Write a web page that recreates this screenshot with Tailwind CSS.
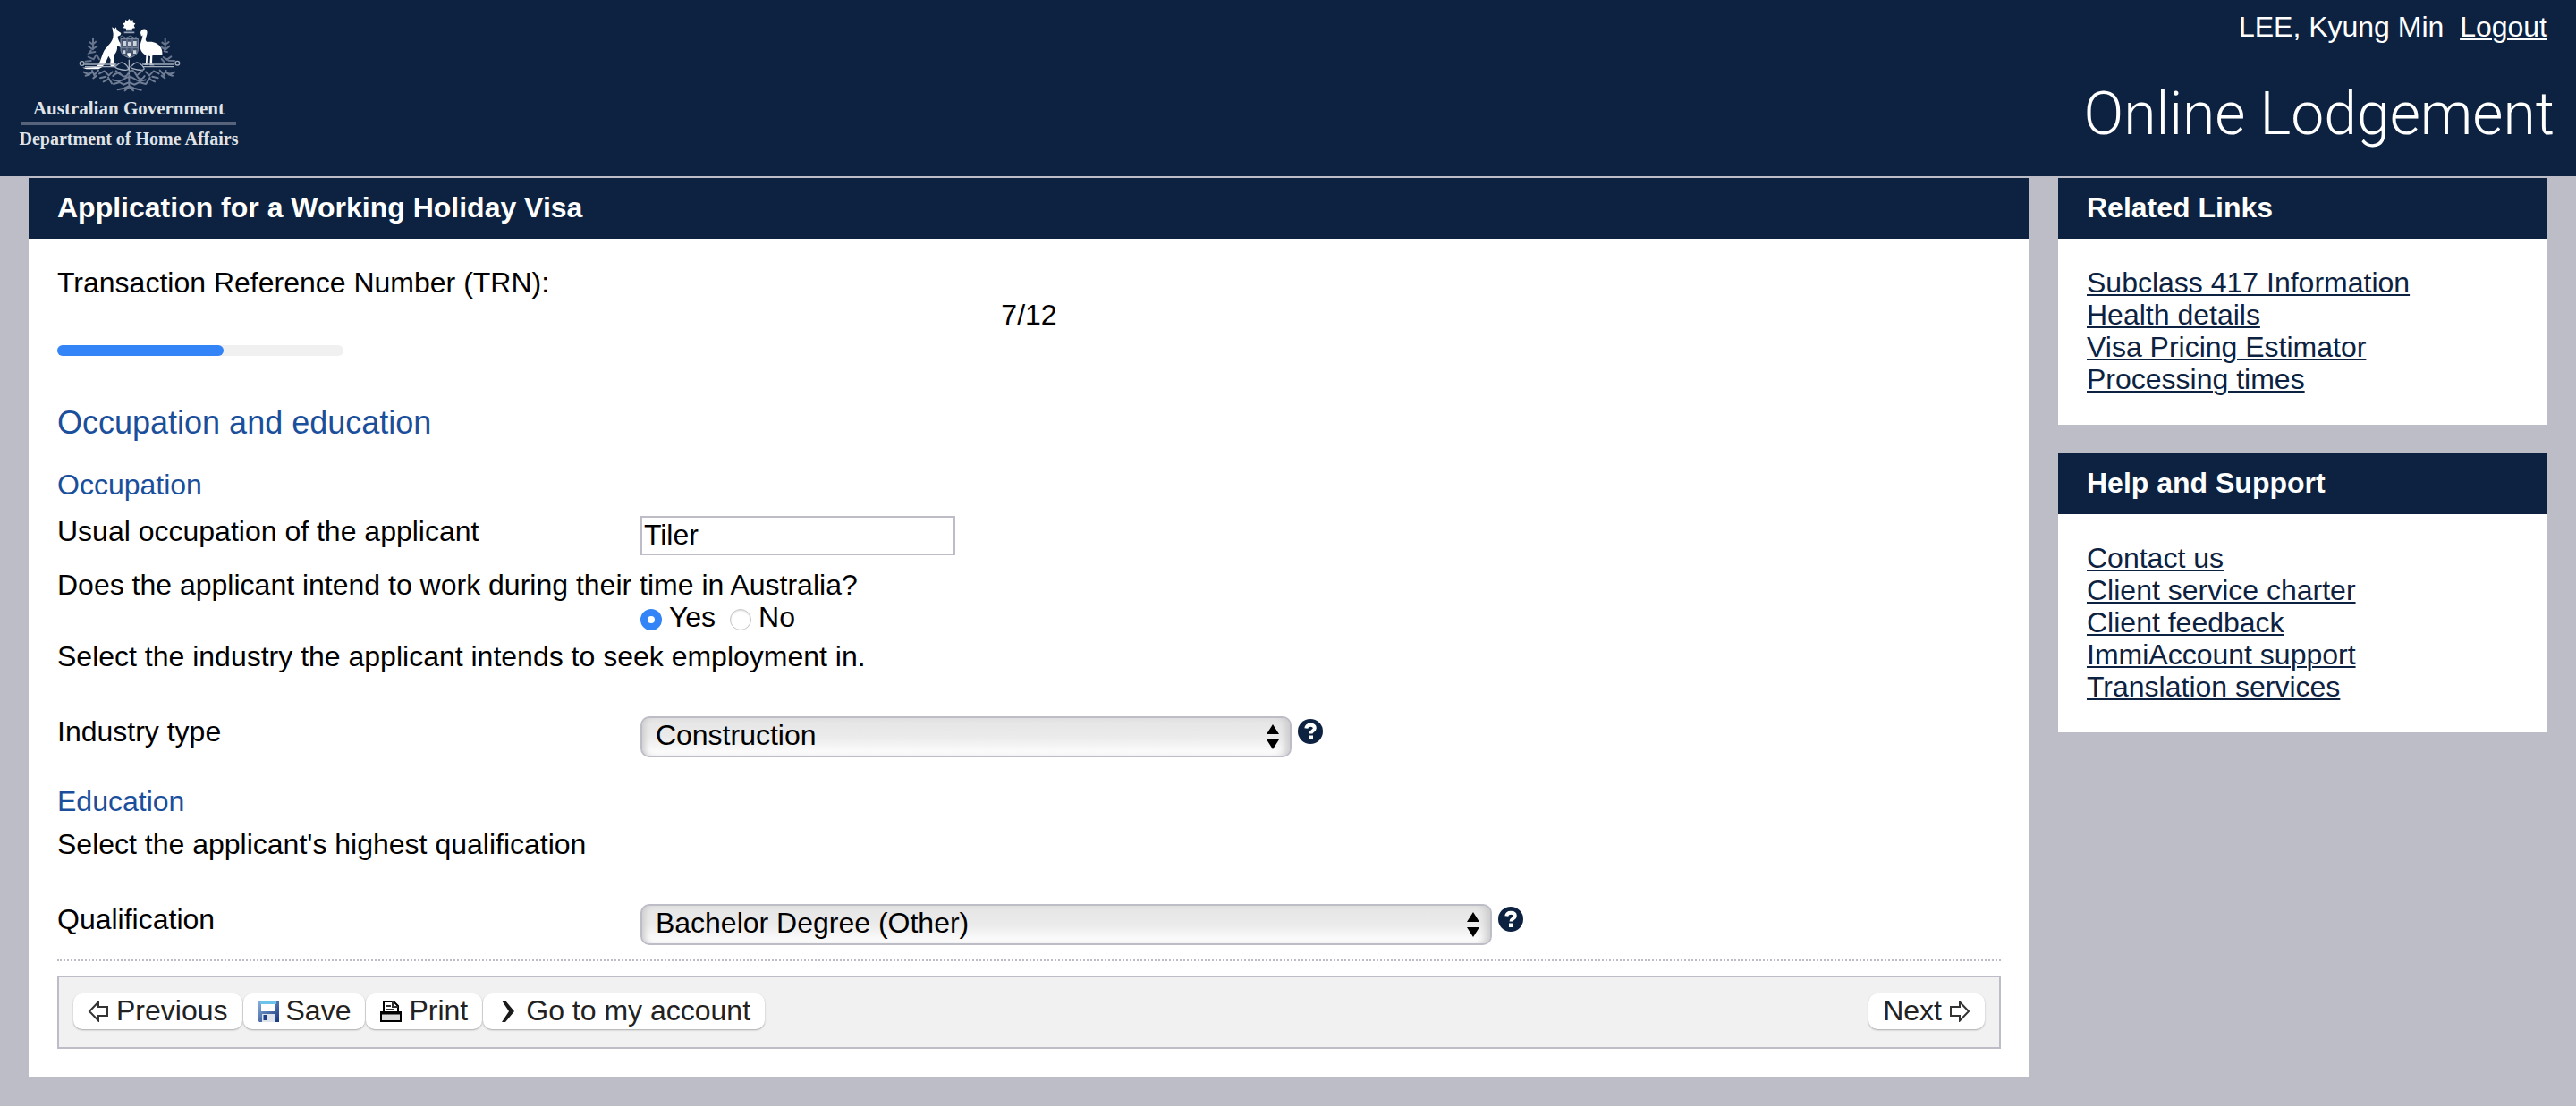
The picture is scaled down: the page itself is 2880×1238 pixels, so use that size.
<!DOCTYPE html>
<html lang="en">
<head>
	<meta charset="UTF-8">
	<meta name="viewport" content="width=device-width, initial-scale=1.0">
	<script src="https://cdn.jsdelivr.net/npm/@tailwindcss/browser@4"></script>
	<title>Application for a Working Holiday Visa</title>
</head>
<body class="bg-white font-['Liberation_Sans',sans-serif] text-[32px] leading-9 text-black">

	<header class="flex justify-between bg-[#0d2240] h-[197px] text-white">
		<div class="ml-6 w-60 pt-4 flex flex-col items-center font-['Liberation_Serif',serif] font-bold text-[20px] leading-[22px] text-[#dfe2e8] whitespace-nowrap">
			<svg class="w-[126px] h-[94px]" viewBox="0 0 378 282" fill="none" aria-label="Commonwealth Coat of Arms" role="img">
				<!-- star and wreath -->
				<path fill="#fff" d="M190 15l5 7 8-3 0 9 8 3-5 7 4 8-9 1-3 8-8-4-8 4-3-8-9-1 4-8-5-7 8-3 0-9 8 3z"/>
				<path stroke="#9aa5b8" stroke-width="5" d="M173 61h35M180 53h20"/>
				<!-- kangaroo -->
				<path fill="#fff" d="M133 43l9 6 4-6 4 11 13 9-2 7-9 4c0 10 5 16 8 23l7 8-5 7-11-7-1 3c1 10-2 20-9 27l-3 19 6 18-12 6-6-8 2-18-7-12-10 22-11 15-12 7H47l-14-5 45-2c14-7 18-32 26-50 7-17 26-26 32-48l1-13z"/>
				<!-- emu -->
				<path fill="#fff" d="M228 62c1-9 9-15 18-11 8 5 4 17 1 26-3 8-2 13 5 16 17-4 37 5 44 18 5 8 6 18 5 27l-15-3-18 4-1 27 8 6h-16l2-31-8-2-2 22 4 9h-15l6-8 1-25c-13-6-21-18-20-33 2-12 9-24 8-34l-4 4z"/>
				<!-- shield -->
				<path fill="#44546f" stroke="#8490a6" stroke-width="3" d="M162 82h58v36c0 15-13 24-29 28-16-4-29-13-29-28z"/>
				<path fill="#cdd3dd" d="M168 90h12v17h-12zM204 90h11v17h-11zM186 92h11v13h-11zM168 121h10v11h-10zM204 121h10v11h-10z"/>
				<path fill="#fff" d="M184 130h14v8l-7 7-7-7z"/>
				<path stroke="#77849b" stroke-width="3" d="M160 76q7-7 13 0t14 0 14 0 14 0M162 112h58M183 84v40M201 84v40"/>
				<!-- branches beside the supporters -->
				<g stroke="#66748d" stroke-width="6" stroke-linecap="round">
					<path d="M69 80v38M57 93l11 8 10-9M54 108l13 9 16-10M62 122l-6 8 20-4M53 143l18 8 8-14M44 158l18-2M82 137l8 14"/>
					<path d="M311 80v38M301 95l10 7 12-9M299 110l12 9 14-12M318 126l-10-2M305 144l12 8 14-10M322 155l20 1M299 150l8 9"/>
				</g>
				<!-- scroll supports -->
				<g stroke="#a2adbd" stroke-width="4">
					<path d="M40 168h108M42 176h102M234 168h108M236 176h104"/>
					<circle cx="32" cy="165" r="7"/>
					<circle cx="352" cy="164" r="7"/>
					<path d="M148 172q18-20 34 0t-16 14-18-14M200 172q16-20 34 0t-16 14-18-14M190 152v50"/>
				</g>
				<!-- wattle -->
				<g stroke="#6f7d95" stroke-width="6" stroke-linecap="round">
					<path d="M38 194q14 10 26 2M44 206l14-4M66 189l7 15 14-16M70 214l11-8M90 199l16-8M93 214l19-5M108 191l14 14 12-12M104 226l16-8M120 212l12 20"/>
					<path d="M342 194q-14 10-26 2M336 206l-14-4M314 189l-7 15-14-16M310 214l-11-8M290 199l-16-8M287 214l-19-5M272 191l-14 14-12-12M276 226l-16-8M260 212l-12 20"/>
					<path d="M136 207q16-18 28-4t24-6 26 6 28 4M135 220q24 8 40-4t32 0 38 4M138 234l20-6 14 8 18-8 18 8 16-8 22 6M190 205v40M152 253l22-5 16-8 16 8 24 6M176 256l14-12 14 12M146 190l14 12M234 190l-14 12"/>
				</g>
			</svg>
			<span class="text-[21px]">Australian Government</span>
			<div class="mt-1 mb-1 w-full h-1 bg-[#56637b]"></div>
			<span>Department of Home Affairs</span>
		</div>
		<div class="flex flex-col items-end">
			<p class="mt-3 mr-8">LEE, Kyung Min&nbsp; <a class="underline decoration-2 underline-offset-2" href="#">Logout</a></p>
			<h1 class="mt-10 mr-6 font-['Roboto',sans-serif] font-light text-[66px] leading-[80px]">Online Lodgement</h1>
		</div>
	</header>

	<div class="flex items-start gap-8 bg-[#bdbdc7] px-8 pt-0.5 pb-8">

		<main class="flex-1 bg-white">
			<h2 class="bg-[#0d2240] text-white font-bold px-8 pt-[15px] pb-[17px]">Application for a Working Holiday Visa</h2>

			<form class="p-8 leading-[34px]">
				<p>Transaction Reference Number (TRN):</p>
				<p class="mt-0.5 text-center">7/12</p>
				<div class="mt-[17px] w-80 h-3 rounded-full bg-[#f0f0f0]" role="progressbar" aria-label="Application progress" aria-valuenow="7" aria-valuemax="12">
					<div class="h-3 rounded-full bg-[#3385f7]" style="width: 58%"></div>
				</div>

				<h3 class="mt-[55px] text-[36px] leading-10 text-[#1a4f9c]">Occupation and education</h3>

				<h4 class="mt-8 text-[#1a4f9c]">Occupation</h4>
				<div class="mt-[18px] flex items-start">
					<label class="w-[30%]" for="occupation">Usual occupation of the applicant</label>
					<input class="w-[352px] h-11 border-2 border-[#bdbdc7] bg-white pl-0.5 pb-0.5" type="text" id="occupation" value="Tiler">
				</div>

				<fieldset class="mt-4">
					<legend>Does the applicant intend to work during their time in Australia?</legend>
					<div class="mt-0.5 ml-[30%] flex gap-4">
						<label class="flex gap-2">
							<input class="mt-2 appearance-none size-6 rounded-full border border-[#c4c4c4] bg-white shadow-[inset_0_1px_2px_#ddd] checked:border-[8px] checked:border-[#3385f7] checked:shadow-none" type="radio" name="work" checked>
							Yes
						</label>
						<label class="flex gap-2">
							<input class="mt-2 appearance-none size-6 rounded-full border border-[#c4c4c4] bg-white shadow-[inset_0_1px_2px_#ddd] checked:border-[8px] checked:border-[#3385f7] checked:shadow-none" type="radio" name="work">
							No
						</label>
					</div>
				</fieldset>

				<p class="mt-[10px]">Select the industry the applicant intends to seek employment in.</p>
				<div class="mt-[50px] flex items-start">
					<label class="w-[30%]" for="industry">Industry type</label>
					<div class="relative">
						<select class="block appearance-none w-[728px] h-[46px] pl-[15px] pb-1 leading-9 rounded-[10px] border-2 border-[#bdbdc7] bg-linear-to-b from-[#e5e5e5] via-[#ebebeb] to-white shadow-[inset_7px_0_6px_-4px_#ccc,inset_-9px_0_8px_-4px_#ccc]" id="industry">
							<option>Construction</option>
						</select>
						<svg class="absolute right-[14px] top-[9px] w-[14px] h-[28px] pointer-events-none" viewBox="0 0 14 28"><path d="M7 0l7 11H0zM7 28l7-11H0z"/></svg>
					</div>
					<button class="ml-[7px] mt-[3px]" type="button" aria-label="Help">
						<svg class="size-7" viewBox="0 0 28 28">
							<circle cx="14" cy="14" r="14" fill="#0d2240"/>
							<path d="M9.300 10.500C9.600 7.800 11.500 6.700 14.200 6.700c3 0 4.600 1.400 4.600 3.500 0 3.300-4.300 3.200-4.300 6.300" fill="none" stroke="#fff" stroke-width="4"/>
							<path d="M12 18.500h5v4.500h-5z" fill="#fff"/>
						</svg>
					</button>
				</div>

				<h4 class="mt-8 text-[#1a4f9c]">Education</h4>
				<p class="mt-[14px]">Select the applicant's highest qualification</p>
				<div class="mt-[50px] flex items-start">
					<label class="w-[30%]" for="qualification">Qualification</label>
					<div class="relative">
						<select class="block appearance-none w-[952px] h-[46px] pl-[15px] pb-1 leading-9 rounded-[10px] border-2 border-[#bdbdc7] bg-linear-to-b from-[#e5e5e5] via-[#ebebeb] to-white shadow-[inset_7px_0_6px_-4px_#ccc,inset_-9px_0_8px_-4px_#ccc]" id="qualification">
							<option>Bachelor Degree (Other)</option>
						</select>
						<svg class="absolute right-[14px] top-[9px] w-[14px] h-[28px] pointer-events-none" viewBox="0 0 14 28"><path d="M7 0l7 11H0zM7 28l7-11H0z"/></svg>
					</div>
					<button class="ml-[7px] mt-[3px]" type="button" aria-label="Help">
						<svg class="size-7" viewBox="0 0 28 28">
							<circle cx="14" cy="14" r="14" fill="#0d2240"/>
							<path d="M9.300 10.500C9.600 7.800 11.500 6.700 14.200 6.700c3 0 4.600 1.400 4.600 3.500 0 3.300-4.300 3.200-4.300 6.300" fill="none" stroke="#fff" stroke-width="4"/>
							<path d="M12 18.500h5v4.500h-5z" fill="#fff"/>
						</svg>
					</button>
				</div>

				<hr class="mt-4 border-t-2 border-dotted border-[#bdbdc7]">

				<div class="mt-4 flex gap-px border-2 border-[#bdbdc7] bg-[#f1f1f1] px-4 pt-[18px] pb-5 leading-9 text-[#222]">
					<button class="flex items-center gap-2 h-10 px-4 pb-0.5 rounded-[10px] bg-white shadow-[0_1px_2px_rgba(0,0,0,0.3)]" type="button">
						<svg class="mt-0.5 size-6" viewBox="0 0 24 24" fill="none" stroke="#333" stroke-width="2"><path d="M2 12L12 1.500V7h10v10H12v5.500z"/></svg>
						Previous
					</button>
					<button class="flex items-center gap-2 h-10 px-4 pb-0.5 rounded-[10px] bg-white shadow-[0_1px_2px_rgba(0,0,0,0.3)]" type="button">
						<svg class="mt-0.5 size-6" viewBox="0 0 24 24">
							<defs>
								<linearGradient id="disk" x1="0" y1="0" x2="1" y2="1">
									<stop offset="0" stop-color="#8fb4e0"/>
									<stop offset="1" stop-color="#15357c"/>
								</linearGradient>
							</defs>
							<path d="M0 0h24v24H2l-2-2z" fill="url(#disk)"/>
							<path d="M3 0h18v4H3z" fill="#6cc3ea"/>
							<path d="M4 4h16v8H4z" fill="#fff"/>
							<path d="M5 15h14v9H5z" fill="#dfe3ec"/>
							<path d="M6.500 16h4v6h-4z" fill="#1d3f86"/>
						</svg>
						Save
					</button>
					<button class="flex items-center gap-2 h-10 px-4 pb-0.5 rounded-[10px] bg-white shadow-[0_1px_2px_rgba(0,0,0,0.3)]" type="button">
						<svg class="mt-0.5 size-6" viewBox="0 0 24 24" fill="none" stroke="#000" stroke-width="2">
							<path d="M4 13V1h11l5 5v7" fill="#fff"/>
							<path d="M14 1v6h6M7 6h5M7 10h9" stroke="#333"/>
							<path d="M1 13h22v10H1z" fill="#dcdcdc"/>
							<path d="M1 14h22" stroke-width="3"/>
						</svg>
						Print
					</button>
					<button class="flex items-center gap-2 h-10 px-4 pb-0.5 rounded-[10px] bg-white shadow-[0_1px_2px_rgba(0,0,0,0.3)]" type="button">
						<svg class="mt-0.5 size-6" viewBox="0 0 24 24"><path d="M5 0h4l10 12-10 12H5l8-12z" fill="#1a1a1a"/></svg>
						Go to my account
					</button>
					<button class="ml-auto flex items-center gap-2 h-10 px-4 pb-0.5 rounded-[10px] bg-white shadow-[0_1px_2px_rgba(0,0,0,0.3)]" type="button">
						Next
						<svg class="mt-0.5 size-6" viewBox="0 0 24 24" fill="none" stroke="#333" stroke-width="2"><path d="M22 12L12 1.500V7H2v10h10v5.500z"/></svg>
					</button>
				</div>
			</form>
		</main>

		<aside class="w-[547px] shrink-0 flex flex-col gap-8">
			<section class="bg-white">
				<h2 class="bg-[#0d2240] text-white font-bold px-8 pt-[15px] pb-[17px]">Related Links</h2>
				<ul class="px-8 pt-[31px] pb-[33px] text-[#0d2240] underline decoration-2 underline-offset-2">
					<li><a href="#">Subclass 417 Information</a></li>
					<li><a href="#">Health details</a></li>
					<li><a href="#">Visa Pricing Estimator</a></li>
					<li><a href="#">Processing times</a></li>
				</ul>
			</section>
			<section class="bg-white">
				<h2 class="bg-[#0d2240] text-white font-bold px-8 pt-[15px] pb-[17px]">Help and Support</h2>
				<ul class="px-8 pt-[31px] pb-[33px] text-[#0d2240] underline decoration-2 underline-offset-2">
					<li><a href="#">Contact us</a></li>
					<li><a href="#">Client service charter</a></li>
					<li><a href="#">Client feedback</a></li>
					<li><a href="#">ImmiAccount support</a></li>
					<li><a href="#">Translation services</a></li>
				</ul>
			</section>
		</aside>
	</div>

</body>
</html>
